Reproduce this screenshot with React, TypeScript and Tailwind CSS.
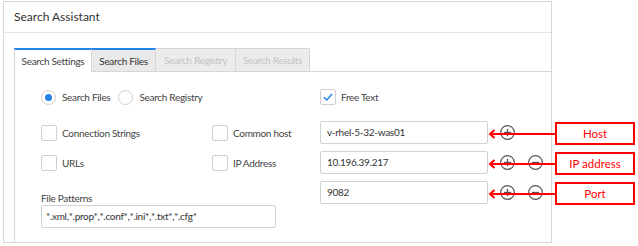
import type { ReactNode } from 'react'

// --- Small controls ----------------------------------------------------------

function Radio({ checked, label }: { checked?: boolean; label: string }) {
  return (
    <label className="flex items-center whitespace-nowrap">
      <span className="flex h-[15px] w-[15px] items-center justify-center rounded-full border border-[#cfcfcf] bg-white">
        {checked && <span className="h-[7px] w-[7px] rounded-full bg-[#2584e8]" />}
      </span>
      <span className="ml-[6px]">{label}</span>
    </label>
  )
}

function Checkbox({ checked, label }: { checked?: boolean; label: string }) {
  return (
    <label className="flex items-center whitespace-nowrap">
      <span className="flex h-[16px] w-[16px] shrink-0 items-center justify-center rounded-[2px] border border-[#cfcfcf] bg-white">
        {checked && (
          <svg width="10" height="8" viewBox="0 0 10 8" fill="none">
            <path d="M1 4.2 L3.8 7 L9 1" stroke="#2584e8" strokeWidth="1.5" />
          </svg>
        )}
      </span>
      <span className="ml-[5px]">{label}</span>
    </label>
  )
}

function CircleButton({ kind }: { kind: 'plus' | 'minus' }) {
  return (
    <svg width="15" height="15" viewBox="0 0 15 15" fill="none">
      <circle cx="7.5" cy="7.5" r="6.8" stroke="#555" strokeWidth="1.2" />
      <path d="M3.8 7.5 H11.2" stroke="#555" strokeWidth="1.3" />
      {kind === 'plus' && <path d="M7.5 3.8 V11.2" stroke="#555" strokeWidth="1.3" />}
    </svg>
  )
}

// --- Red callout over the screenshot -----------------------------------------

function Callout({ text }: { text: string }) {
  return (
    <div className="absolute left-[168px] top-[1px] flex h-[23px] items-center">
      <svg width="67" height="23" viewBox="0 0 67 23" fill="none">
        <path d="M2 12 H67" stroke="#ff0000" strokeWidth="2" />
        <path d="M6.5 8 L2 12 L6.5 16" stroke="#ff0000" strokeWidth="2" />
      </svg>
      <div className="flex h-[23px] w-[80px] items-center justify-center border-2 border-[#ff0000] bg-white text-[11.5px] tracking-normal text-[#ff0000]">
        {text}
      </div>
    </div>
  )
}

function ValueRow({
  value,
  minus,
  callout,
  className = '',
}: {
  value: string
  minus?: boolean
  callout: string
  className?: string
}) {
  return (
    <div className={`relative flex h-[23px] items-center ${className}`}>
      <div className="flex h-[23px] w-[168px] items-center rounded-[2px] border border-[#d2d2d2] px-[6px] text-[#333]">
        {value}
      </div>
      <span className="ml-[12px] flex">
        <CircleButton kind="plus" />
      </span>
      {minus && (
        <span className="ml-[13px] flex">
          <CircleButton kind="minus" />
        </span>
      )}
      <Callout text={callout} />
    </div>
  )
}

function Tab({
  children,
  width,
  state,
}: {
  children: ReactNode
  width: string
  state: 'open' | 'disabled'
}) {
  const look =
    state === 'open'
      ? 'border-t-2 border-t-[#2584e8] bg-[#e9e9e9] text-[#333]'
      : 'bg-[#ececec] text-[#c2c2c2]'
  return (
    <div
      className={`relative z-10 -mb-px flex h-[24px] items-center justify-center whitespace-nowrap border border-l-0 border-[#d6d6d6] pt-[1px] ${width} ${look}`}
    >
      {children}
    </div>
  )
}

// --- Page --------------------------------------------------------------------

export default function App() {
  return (
    <div
      className="h-[246px] w-[638px] overflow-hidden bg-white pl-[3px] pt-[1px] text-[10px] tracking-[-0.3px] text-[#444]"
      style={{ fontFamily: 'Lato, "Open Sans", sans-serif' }}
    >
      <div className="flex h-[242px] w-[549px] flex-col border border-[#d6d6d6]">
        {/* Header */}
        <div className="flex h-[31px] shrink-0 items-center border-b border-[#e4e4e4] pl-[10px] text-[12px] tracking-normal text-[#333]">
          Search Assistant
        </div>

        <div className="flex flex-1 flex-col pl-[10px] pt-[15px]">
          {/* Tabs */}
          <div className="flex">
            <div className="relative z-10 -mb-px flex h-[24px] w-[78px] items-center justify-center whitespace-nowrap border-x border-t-2 border-[#d6d6d6] border-t-[#2584e8] bg-white pt-[1px] text-[#444]">
              Search Settings
            </div>
            <Tab width="w-[64px]" state="open">
              Search Files
            </Tab>
            <Tab width="w-[80px]" state="disabled">
              Search Registry
            </Tab>
            <Tab width="w-[74px]" state="disabled">
              Search Results
            </Tab>
          </div>

          {/* Tab body */}
          <div className="flex flex-1 border-l border-t border-[#d6d6d6] pl-[26px] pt-[17px]">
            {/* Left column */}
            <div className="flex w-[235px] flex-col">
              <div className="flex h-[16px] items-center gap-[8px]">
                <Radio checked label="Search Files" />
                <Radio label="Search Registry" />
              </div>
              <div className="mt-[20px] grid h-[16px] grid-cols-[171px_64px]">
                <Checkbox label="Connection Strings" />
                <Checkbox label="Common host" />
              </div>
              <div className="mt-[14px] grid h-[16px] grid-cols-[171px_64px]">
                <Checkbox label="URLs" />
                <Checkbox label="IP Address" />
              </div>
              <div className="mt-[21px] h-[13px] leading-[13px]">File Patterns</div>
              <div className="flex h-[23px] items-center whitespace-nowrap rounded-[2px] border border-[#d2d2d2] px-[4px] text-[#333]">
                *.xml,*.prop*,*.conf*,*.ini*,*.txt*,*.cfg*
              </div>
            </div>

            {/* Right column */}
            <div className="ml-[44px] flex flex-col">
              <div className="flex h-[16px] items-center">
                <Checkbox checked label="Free Text" />
              </div>
              <ValueRow className="mt-[16px]" value="v-rhel-5-32-was01" callout="Host" />
              <ValueRow className="mt-[7px]" value="10.196.39.217" minus callout="IP address" />
              <ValueRow className="mt-[7px]" value="9082" minus callout="Port" />
            </div>
          </div>
        </div>
      </div>
    </div>
  )
}
